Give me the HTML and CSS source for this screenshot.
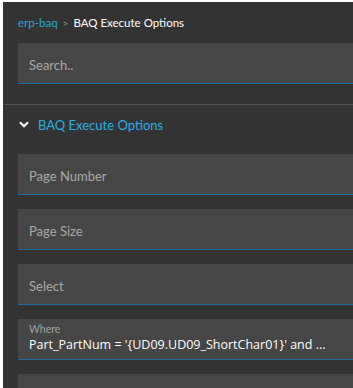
FILE: index.html
```html
<!DOCTYPE html>
<html lang="en">
<head>
    <meta charset="UTF-8">
    <meta name="viewport" content="width=device-width, initial-scale=1.0">
    <title>BAQ Execute Options</title>
    <link rel="stylesheet" href="styles.css">
</head>
<body>
    <div class="panel">
        <!-- Breadcrumb -->
        <div class="crumbs">
            <span class="crumb-link">erp-baq</span>
            <span class="crumb-sep">&gt;</span>
            <span class="crumb-current">BAQ Execute Options</span>
        </div>

        <div class="search">
            <div class="field">
                <span class="placeholder">Search..</span>
            </div>
        </div>

        <div class="section">
            <div class="section-head">
                <svg class="chevron" width="10" height="7" viewBox="0 0 10 7">
                    <path d="M1 1.2 L5 5.2 L9 1.2" fill="none" stroke="#fff" stroke-width="2.2"/>
                </svg>
                <span class="section-title">BAQ Execute Options</span>
            </div>

            <div class="fields">
                <div class="field"><span class="placeholder">Page Number</span></div>
                <div class="field"><span class="placeholder">Page Size</span></div>
                <div class="field"><span class="placeholder">Select</span></div>
                <div class="field field-filled">
                    <span class="label">Where</span>
                    <span class="value">Part_PartNum = '{UD09.UD09_ShortChar01}' and ...</span>
                </div>
                <!-- next field, only its top shows -->
                <div class="field"></div>
            </div>
        </div>
    </div>
</body>
</html>
```

FILE: styles.css
```css
body {
    margin: 0;
    padding: 2px 0 0 3px;
    background-color: #fff;
    font-family: 'Lato', 'Open Sans', sans-serif;
    height: 386px;
    overflow: hidden;
}

.panel {
    background-color: #333333;
    height: 100%;
}

/* --- Breadcrumb --- */
.crumbs {
    padding: 13px 0 0 15px;
    height: 28px;
    box-sizing: border-box;
    font-size: 11.5px;
    display: flex;
    gap: 5px;
    align-items: center;
}

.crumb-link { color: #2aa5df; }
.crumb-sep { color: #a0a0a0; font-size: 10px; }
.crumb-current { color: #fff; }

.search {
    padding: 13px 0 20px 15px;
    border-bottom: 1px solid #525252;
}

/* --- Fields --- */
.field {
    background-color: #464646;
    height: 41px;
    box-sizing: border-box;
    border-bottom: 1px solid #1d6ea6;
    display: flex;
    flex-direction: column;
    justify-content: center;
    padding: 3px 0 0 11px;
}

.placeholder {
    color: #a9a9a9;
    font-size: 13px;
}

.field-filled {
    justify-content: flex-start;
    padding-top: 4px;
}

.label {
    color: #a0a0a0;
    font-size: 10.5px;
    line-height: 13px;
}

.value {
    color: #fff;
    font-family: 'Open Sans', sans-serif;
    font-size: 12.5px;
    line-height: 18px;
    white-space: nowrap;
}

/* --- Section --- */
.section-head {
    display: flex;
    align-items: center;
    height: 39px;
    padding-left: 16px;
    padding-bottom: 2px;
}

.chevron {
    margin-right: 9px;
}

.section-title {
    color: #2aaee6;
    font-size: 13px;
}

.fields {
    padding: 8px 0 0 15px;
    display: flex;
    flex-direction: column;
    gap: 14px;
}
```
